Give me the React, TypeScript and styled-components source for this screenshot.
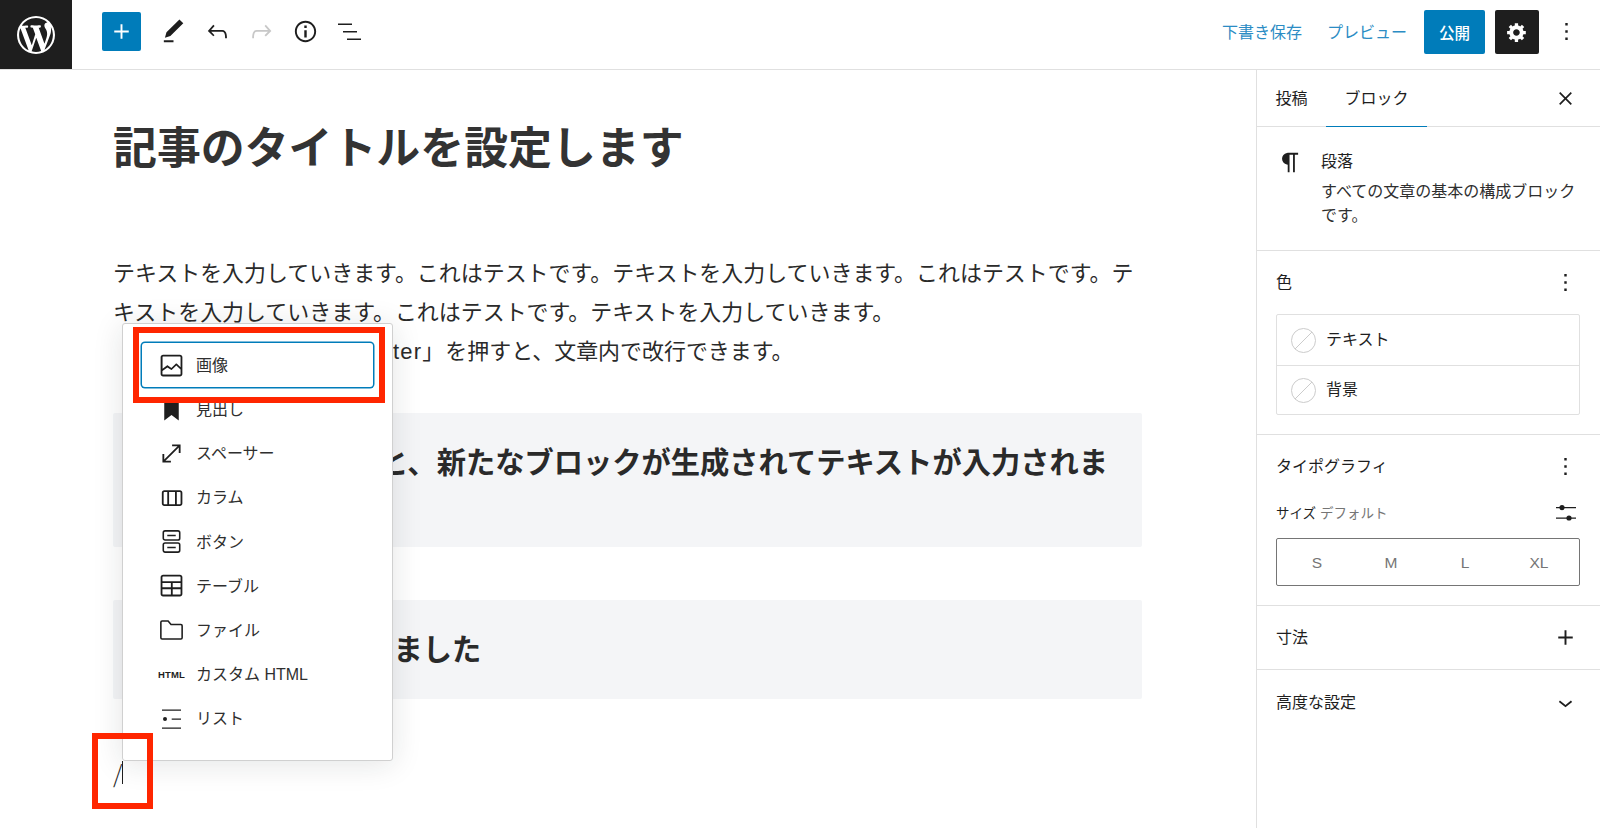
import { ReactNode } from "react";
import styled, { createGlobalStyle } from "styled-components";

const GlobalStyle = createGlobalStyle`
  html, body {
    margin: 0;
    height: 828px;
    overflow: hidden;
    background: #fff;
  }
  * {
    box-sizing: border-box;
  }
  body {
    font-family: "Liberation Sans", "Noto Sans CJK JP", sans-serif;
    color: #1e1e1e;
  }
`;

const Page = styled.div`
  width: 1600px;
  height: 828px;
  display: flex;
  flex-direction: column;
`;

const Header = styled.header`
  height: 70px;
  flex: none;
  display: flex;
  align-items: center;
  padding: 0 12px 6px 0;
  border-bottom: 1px solid #e0e0e0;
`;
const LogoBox = styled.div`
  width: 72px;
  height: 69px;
  align-self: flex-start;
  background: #1e1e1e;
  display: flex;
  align-items: center;
  justify-content: center;
  color: #fff;
`;
const LeftTools = styled.div`
  display: flex;
  align-items: center;
  margin-left: 30px;
`;
const AddButton = styled.div`
  width: 39px;
  height: 39px;
  margin-right: 10px;
  background: #007cba;
  border-radius: 2px;
  color: #fff;
  display: flex;
  align-items: center;
  justify-content: center;
`;
const ToolButton = styled.div<{ $muted?: boolean }>`
  width: 44px;
  height: 44px;
  display: flex;
  align-items: center;
  justify-content: center;
  color: ${(p) => (p.$muted ? "#c8c8c8" : "#1e1e1e")};
`;
const RightTools = styled.div`
  margin-left: auto;
  display: flex;
  align-items: center;
`;
const LinkText = styled.span`
  font-size: 16px;
  color: #2b8cc4;
  margin-right: 25px;
  padding-bottom: 2px;
  white-space: nowrap;
`;
const PublishButton = styled.div`
  width: 61px;
  height: 44px;
  margin-left: -8px;
  background: #007cba;
  border-radius: 2px;
  color: #fff;
  font-size: 15.5px;
  font-weight: 500;
  display: flex;
  align-items: center;
  justify-content: center;
`;
const SettingsButton = styled.div`
  width: 44px;
  height: 44px;
  margin-left: 10px;
  margin-right: 5px;
  background: #1e1e1e;
  border-radius: 2px;
  color: #fff;
  display: flex;
  align-items: center;
  justify-content: center;
`;

const Main = styled.main`
  flex: 1;
  display: flex;
  min-height: 0;
`;
const Editor = styled.section`
  position: relative;
  flex: 1;
  padding: 48px 114px 0 113px;
`;
const Title = styled.h1`
  margin: 0 0 74px;
  font-size: 43.9px;
  line-height: 62px;
  font-weight: 700;
  color: #333;
`;
const Paragraph = styled.p`
  margin: 0 0 42px;
  font-size: 21.96px;
  line-height: 39px;
  font-weight: 400;
  color: #2a2a2a;
  white-space: nowrap;
`;
const KeyName = styled.span`
  letter-spacing: 1.2px;
`;
const HeadingBlock = styled.h2<{ $inset: number }>`
  margin: 0 0 53px;
  padding: 32px 20px 31px ${(p) => p.$inset}px;
  background: #f4f5f7;
  border-radius: 2px;
  font-size: 29.28px;
  line-height: 35.5px;
  font-weight: 700;
  color: #2a2a2a;
`;
const SlashLine = styled.div`
  display: flex;
  align-items: center;
  margin-top: 54px;
  height: 39px;
  font-family: "Noto Sans CJK JP", sans-serif;
  font-size: 24px;
  font-weight: 300;
  color: #2a2a2a;
`;
const Caret = styled.span`
  width: 1px;
  height: 23px;
  background: #1e1e1e;
`;

const Popup = styled.div`
  position: absolute;
  left: 122px;
  top: 253px;
  width: 271px;
  height: 438px;
  padding: 19px 19px 0;
  background: #fff;
  border: 1px solid #d0d0d0;
  border-radius: 3px;
  box-shadow: 0 3px 30px rgba(25, 30, 35, 0.12);
`;
const MenuItem = styled.div<{ $active?: boolean }>`
  height: 44.15px;
  display: flex;
  align-items: center;
  gap: 10px;
  padding-left: 15px;
  font-size: 16px;
  color: #2f2f2f;
  border-radius: 3px;
  box-shadow: ${(p) => (p.$active ? "0 0 0 1.5px #007cba" : "none")};
`;
const MenuIcon = styled.span`
  width: 29px;
  flex: none;
  display: flex;
  align-items: center;
  justify-content: center;
  color: #1e1e1e;
`;
const MenuLabel = styled.span`
  padding-bottom: 2px;
`;
const HtmlGlyph = styled.span`
  font-size: 9.5px;
  font-weight: 700;
  letter-spacing: 0.2px;
  white-space: nowrap;
`;
const Highlight = styled.div<{ $left: number; $top: number; $w: number; $h: number }>`
  position: absolute;
  left: ${(p) => p.$left}px;
  top: ${(p) => p.$top}px;
  width: ${(p) => p.$w}px;
  height: ${(p) => p.$h}px;
  border: 6px solid #ff2600;
`;

const Sidebar = styled.aside`
  width: 344px;
  flex: none;
  border-left: 1px solid #e0e0e0;
  font-size: 16px;
`;
const Label = styled.span`
  padding-bottom: 3px;
`;
const Tabs = styled.div`
  height: 57px;
  display: flex;
  align-items: stretch;
  padding-right: 20px;
  border-bottom: 1px solid #e0e0e0;
`;
const Tab = styled.div<{ $active?: boolean }>`
  display: flex;
  align-items: center;
  padding: 0 18.5px;
  margin-bottom: -1px;
  color: #1e1e1e;
  border-bottom: 1px solid ${(p) => (p.$active ? "#007cba" : "transparent")};
`;
const IconSlot = styled.span`
  display: flex;
`;
const TabClose = styled(IconSlot)`
  margin-left: auto;
  align-self: center;
`;
const Section = styled.div`
  padding: 15px 20px 19px 19px;
  border-bottom: 1px solid #e0e0e0;
`;
const BlockCard = styled.div`
  display: flex;
  padding: 24px 20px 22px 19px;
  border-bottom: 1px solid #e0e0e0;
`;
const BlockIcon = styled.span`
  width: 29px;
  height: 29px;
  flex: none;
  margin: -3px 16px 0 0;
  display: flex;
`;
const BlockName = styled.div`
  line-height: 24px;
  margin-bottom: 6px;
  margin-top: -1px;
`;
const BlockDesc = styled.div`
  line-height: 24px;
  color: #2f2f2f;
`;
const SectionHead = styled.div`
  height: 32px;
  display: flex;
  align-items: center;
  justify-content: space-between;
`;
const ColorList = styled.div`
  margin-top: 16px;
  border: 1px solid #e0e0e0;
  border-radius: 2px;
`;
const ColorRow = styled.div`
  height: 50px;
  display: flex;
  align-items: center;
  gap: 10px;
  padding-left: 14px;
  & + & {
    height: 49px;
    border-top: 1px solid #e0e0e0;
  }
`;
const ColorName = styled.span`
  padding-bottom: 5px;
`;
const Swatch = styled.span`
  width: 25px;
  height: 25px;
  border-radius: 50%;
  border: 1px solid #ccc;
  background: linear-gradient(
    -45deg,
    transparent 48.5%,
    #ccc 48.5%,
    #ccc 51.5%,
    transparent 51.5%
  );
`;
const SizeRow = styled.div`
  height: 24px;
  margin-top: 19px;
  display: flex;
  align-items: center;
  font-size: 13.5px;
`;
const SizeValue = styled.span`
  margin-left: 4px;
  padding-bottom: 3px;
  color: #757575;
`;
const SizeIcon = styled(IconSlot)`
  margin-left: auto;
  margin-right: 2px;
`;
const SizeGroup = styled.div`
  height: 48px;
  margin-top: 13px;
  padding: 0 3px;
  display: grid;
  grid-template-columns: repeat(4, 1fr);
  border: 1px solid #757575;
  border-radius: 2px;
`;
const SizeOption = styled.div`
  display: flex;
  align-items: center;
  justify-content: center;
  padding-top: 1px;
  font-size: 15.5px;
  color: #757575;
`;
const Collapsed = styled.div<{ $height: number; $open?: boolean }>`
  height: ${(p) => p.$height}px;
  padding: 0 20px 0 19px;
  display: flex;
  align-items: center;
  justify-content: space-between;
  border-bottom: ${(p) => (p.$open ? "none" : "1px solid #e0e0e0")};
`;

const Icon = ({ size = 29, box = 24, d, children }: { size?: number; box?: number; d?: string; children?: ReactNode }) => (
  <svg width={size} height={size} viewBox={`0 0 ${box} ${box}`} fill="currentColor">
    {d && <path d={d} />}
    {children}
  </svg>
);

const paths = {
  wp: "M20 10c0-5.51-4.49-10-10-10C4.48 0 0 4.49 0 10c0 5.52 4.48 10 10 10 5.51 0 10-4.48 10-10zM7.78 15.37L4.37 6.22c.55-.02 1.17-.08 1.17-.08.5-.06.44-1.13-.06-1.11 0 0-1.45.11-2.37.11-.18 0-.37 0-.58-.01C4.12 2.69 6.87 1.11 10 1.11c2.33 0 4.45.87 6.05 2.34-.68-.11-1.65.39-1.65 1.58 0 .74.45 1.36.9 2.1.35.61.55 1.36.55 2.46 0 1.49-1.4 5-1.4 5l-3.03-8.37c.54-.02.82-.17.82-.17.5-.05.44-1.25-.06-1.22 0 0-1.44.12-2.38.12-.87 0-2.33-.12-2.33-.12-.5-.03-.56 1.2-.06 1.22l.92.08 1.26 3.41zM17.41 10c.24-.64.74-1.87.43-4.25.7 1.29 1.05 2.71 1.05 4.25 0 3.29-1.73 6.24-4.4 7.78.97-2.59 1.94-5.2 2.92-7.78zM6.1 18.09C3.12 16.65 1.11 13.53 1.11 10c0-1.3.23-2.48.72-3.59C3.25 10.3 4.67 14.2 6.1 18.09zm4.03-6.63l2.58 6.98c-.86.29-1.76.45-2.71.45-.79 0-1.57-.11-2.29-.33.81-2.38 1.62-4.74 2.42-7.1z",
  plus: "M18 11.2h-5.2V6h-1.6v5.2H6v1.6h5.2V18h1.6v-5.2H18z",
  pencil: "M20.1 5.1L16.9 2 6.2 12.7l-1.3 4.4 4.5-1.3L20.1 5.1zM4 20.8h8v-1.5H4v1.5z",
  undo: "M18.3 11.7c-.6-.6-1.4-.9-2.3-.9H6.7l2.9-3.3-1.1-1-4.5 5L8.5 16l1-1-2.7-2.7H16c.5 0 .9.2 1.3.5 1 1 1 3.4 1 4.5v.3h1.5v-.2c0-1.5 0-4.3-1.5-5.7z",
  redo: "M15.6 6.5l-1.1 1 2.9 3.3H8c-.9 0-1.7.3-2.3.9-1.4 1.5-1.4 4.2-1.4 5.6v.2h1.5v-.3c0-1.1 0-3.5 1-4.5.3-.3.7-.5 1.3-.5h9.2L14.5 15l1.1 1.1 4.6-4.6-4.6-5z",
  info: "M12 3.2c-4.8 0-8.8 3.9-8.8 8.8 0 4.8 3.9 8.8 8.8 8.8 4.8 0 8.8-3.9 8.8-8.8 0-4.8-4-8.8-8.8-8.8zm0 16c-4 0-7.2-3.3-7.2-7.2C4.8 8 8 4.8 12 4.8s7.2 3.3 7.2 7.2c0 4-3.2 7.2-7.2 7.2zM11 17h2v-6h-2v6zm0-8h2V7h-2v2z",
  list: "M1 3.6h14v1.5H1zM6 11.1h14v1.5H6zM10 18.6h14v1.5H10z",
  cog: "M18 12h-2.18c-.17.7-.44 1.35-.81 1.93l1.54 1.54-2.1 2.1-1.54-1.54c-.58.36-1.23.63-1.91.79V19H8v-2.18c-.68-.16-1.33-.43-1.91-.79l-1.54 1.54-2.12-2.12 1.54-1.54c-.36-.58-.63-1.23-.79-1.91H1V9.03h2.17c.16-.7.44-1.35.8-1.94L2.43 5.55l2.1-2.1 1.54 1.54c.58-.37 1.24-.64 1.93-.81V2h3v2.18c.68.16 1.33.43 1.91.79l1.54-1.54 2.12 2.12-1.54 1.54c.36.59.64 1.24.8 1.94H18V12zm-8.5 1.5c1.66 0 3-1.34 3-3s-1.34-3-3-3-3 1.34-3 3 1.34 3 3 3z",
  dots: "M13 19h-2v-2h2v2zm0-6h-2v-2h2v2zm0-6h-2V5h2v2z",
  chevron: "M17.5 11.6L12 16l-5.5-4.4.9-1.2L12 14l4.5-3.6 1 1.2z",
  paragraph: "M18.3 4H9.9v-.1l-.9.2c-2.3.4-4 2.4-4 4.8s1.7 4.4 4 4.8l.7.1V20h1.5V5.5h2.9V20h1.5V5.5h2.7V4z",
  image: "M19 3H5c-1.1 0-2 .9-2 2v14c0 1.1.9 2 2 2h14c1.1 0 2-.9 2-2V5c0-1.1-.9-2-2-2zM5 4.5h14c.3 0 .5.2.5.5v8.4l-3-2.9c-.3-.3-.8-.3-1 0L11.9 14 9 12c-.3-.2-.6-.2-.8 0l-3.6 2.6V5c-.1-.3.1-.5.4-.5zm14 15H5c-.3 0-.5-.2-.5-.5v-2.4l4.1-3 3 1.9c.3.2.7.2.9-.1L16 12l3.5 3.4V19c0 .3-.2.5-.5.5z",
  bookmark: "M6 2.5h12V21l-6-4.5L6 21z",
  resize: "M7 18h4.5v1.5h-7v-7H6V17L17 6h-4.5V4.5h7v7H18V7L7 18Z",
  columns: "M19 6H6c-1.1 0-2 .9-2 2v9c0 1.1.9 2 2 2h13c1.1 0 2-.9 2-2V8c0-1.1-.9-2-2-2zm-4.1 1.5v10H10v-10h4.9zM5.5 17V8c0-.3.2-.5.5-.5h2.5v10H6c-.3 0-.5-.2-.5-.5zm14 0c0 .3-.2.5-.5.5h-2.6v-10H19c.3 0 .5.2.5.5v9z",
  table: "M19 3H5c-1.1 0-2 .9-2 2v14c0 1.1.9 2 2 2h14c1.1 0 2-.9 2-2V5c0-1.1-.9-2-2-2zM5 4.5h14c.3 0 .5.2.5.5v3.5h-15V5c0-.3.2-.5.5-.5zm8 5.5h6.5v3.5H13V10zm-1.5 3.5h-7V10h7v3.5zm-7 5.5v-4h7v4.5H5c-.3 0-.5-.2-.5-.5zm14.5.5h-6V15h6.5v4c0 .3-.2.5-.5.5z",
};

const CloseIcon = () => (
  <Icon>
    <path d="M7.2 7.2l9.6 9.6M16.8 7.2l-9.6 9.6" fill="none" stroke="currentColor" strokeWidth="1.4" />
  </Icon>
);
const ButtonsIcon = () => (
  <Icon>
    <g fill="none" stroke="currentColor" strokeWidth="1.3">
      <rect x="5.2" y="3.2" width="13.6" height="7.6" rx="1.5" />
      <rect x="5.2" y="13.2" width="13.6" height="7.6" rx="1.5" />
      <path d="M8.5 7h7M8.5 17h7" />
    </g>
  </Icon>
);
const FolderIcon = () => (
  <Icon>
    <path
      d="M3.2 18.8V6c0-.6.4-1 1-1h5l2.4 2.8h8.2c.6 0 1 .4 1 1v10c0 .6-.4 1-1 1H4.2c-.6 0-1-.4-1-1z"
      fill="none"
      stroke="currentColor"
      strokeWidth="1.3"
    />
  </Icon>
);
const ListIcon = () => (
  <Icon size={24}>
    <path d="M2 3.4h19v1.4H2zM11.7 12.4H21v1.4h-9.3zM2 21.4h19v1.4H2z" />
    <circle cx="5" cy="13" r="2" />
  </Icon>
);
const SlidersIcon = () => (
  <Icon size={24}>
    <path d="M2 6h20v1.3H2zM2 16.4h20v1.3H2z" />
    <circle cx="8" cy="6.6" r="2.6" />
    <circle cx="15" cy="17" r="2.6" />
  </Icon>
);

const MENU: { label: string; icon: ReactNode; active?: boolean }[] = [
  { label: "画像", icon: <Icon d={paths.image} />, active: true },
  { label: "見出し", icon: <Icon d={paths.bookmark} /> },
  { label: "スペーサー", icon: <Icon d={paths.resize} /> },
  { label: "カラム", icon: <Icon d={paths.columns} /> },
  { label: "ボタン", icon: <ButtonsIcon /> },
  { label: "テーブル", icon: <Icon d={paths.table} /> },
  { label: "ファイル", icon: <FolderIcon /> },
  { label: "カスタム HTML", icon: <HtmlGlyph>HTML</HtmlGlyph> },
  { label: "リスト", icon: <ListIcon /> },
];

const App = () => {
  return (
    <Page>
      <GlobalStyle />
      <Header>
        <LogoBox>
          <Icon size={38} box={20} d={paths.wp} />
        </LogoBox>
        <LeftTools>
          <AddButton>
            <Icon d={paths.plus} />
          </AddButton>
          <ToolButton>
            <Icon d={paths.pencil} />
          </ToolButton>
          <ToolButton>
            <Icon d={paths.undo} />
          </ToolButton>
          <ToolButton $muted>
            <Icon d={paths.redo} />
          </ToolButton>
          <ToolButton>
            <Icon d={paths.info} />
          </ToolButton>
          <ToolButton>
            <Icon size={24} d={paths.list} />
          </ToolButton>
        </LeftTools>
        <RightTools>
          <LinkText>下書き保存</LinkText>
          <LinkText>プレビュー</LinkText>
          <PublishButton>公開</PublishButton>
          <SettingsButton>
            <Icon size={22} box={20} d={paths.cog} />
          </SettingsButton>
          <ToolButton>
            <Icon d={paths.dots} />
          </ToolButton>
        </RightTools>
      </Header>
      <Main>
        <Editor>
          <Title>記事のタイトルを設定します</Title>
          <Paragraph>
            テキストを入力していきます。これはテストです。テキストを入力していきます。これはテストです。テ
            <br />
            キストを入力していきます。これはテストです。テキストを入力していきます。
            <br />
            「改行」する時は「shift+<KeyName>Enter」</KeyName>を押すと、文章内で改行できます。
          </Paragraph>
          <HeadingBlock $inset={37}>
            Enter キーを押すと、新たなブロックが生成されてテキストが入力されま
            <br />
            す。
          </HeadingBlock>
          <HeadingBlock $inset={17}>ここに見出しも入りました</HeadingBlock>
          <SlashLine>
            /<Caret />
          </SlashLine>
          <Popup>
            {MENU.map((item) => (
              <MenuItem key={item.label} $active={item.active}>
                <MenuIcon>{item.icon}</MenuIcon>
                <MenuLabel>{item.label}</MenuLabel>
              </MenuItem>
            ))}
          </Popup>
          <Highlight $left={133} $top={257} $w={252} $h={76} />
          <Highlight $left={92} $top={663} $w={61} $h={76} />
        </Editor>
        <Sidebar>
          <Tabs>
            <Tab>
              <Label>投稿</Label>
            </Tab>
            <Tab $active>
              <Label>ブロック</Label>
            </Tab>
            <TabClose>
              <CloseIcon />
            </TabClose>
          </Tabs>
          <BlockCard>
            <BlockIcon>
              <Icon d={paths.paragraph} />
            </BlockIcon>
            <div>
              <BlockName>段落</BlockName>
              <BlockDesc>すべての文章の基本の構成ブロックです。</BlockDesc>
            </div>
          </BlockCard>
          <Section>
            <SectionHead>
              <Label>色</Label>
              <IconSlot>
                <Icon d={paths.dots} />
              </IconSlot>
            </SectionHead>
            <ColorList>
              <ColorRow>
                <Swatch />
                <ColorName>テキスト</ColorName>
              </ColorRow>
              <ColorRow>
                <Swatch />
                <ColorName>背景</ColorName>
              </ColorRow>
            </ColorList>
          </Section>
          <Section>
            <SectionHead>
              <Label>タイポグラフィ</Label>
              <IconSlot>
                <Icon d={paths.dots} />
              </IconSlot>
            </SectionHead>
            <SizeRow>
              <Label>サイズ</Label>
              <SizeValue>デフォルト</SizeValue>
              <SizeIcon>
                <SlidersIcon />
              </SizeIcon>
            </SizeRow>
            <SizeGroup>
              <SizeOption>S</SizeOption>
              <SizeOption>M</SizeOption>
              <SizeOption>L</SizeOption>
              <SizeOption>XL</SizeOption>
            </SizeGroup>
          </Section>
          <Collapsed $height={64}>
            <Label>寸法</Label>
            <IconSlot>
              <Icon d={paths.plus} />
            </IconSlot>
          </Collapsed>
          <Collapsed $height={64} $open>
            <Label>高度な設定</Label>
            <IconSlot>
              <Icon d={paths.chevron} />
            </IconSlot>
          </Collapsed>
        </Sidebar>
      </Main>
    </Page>
  );
};

export default App;
